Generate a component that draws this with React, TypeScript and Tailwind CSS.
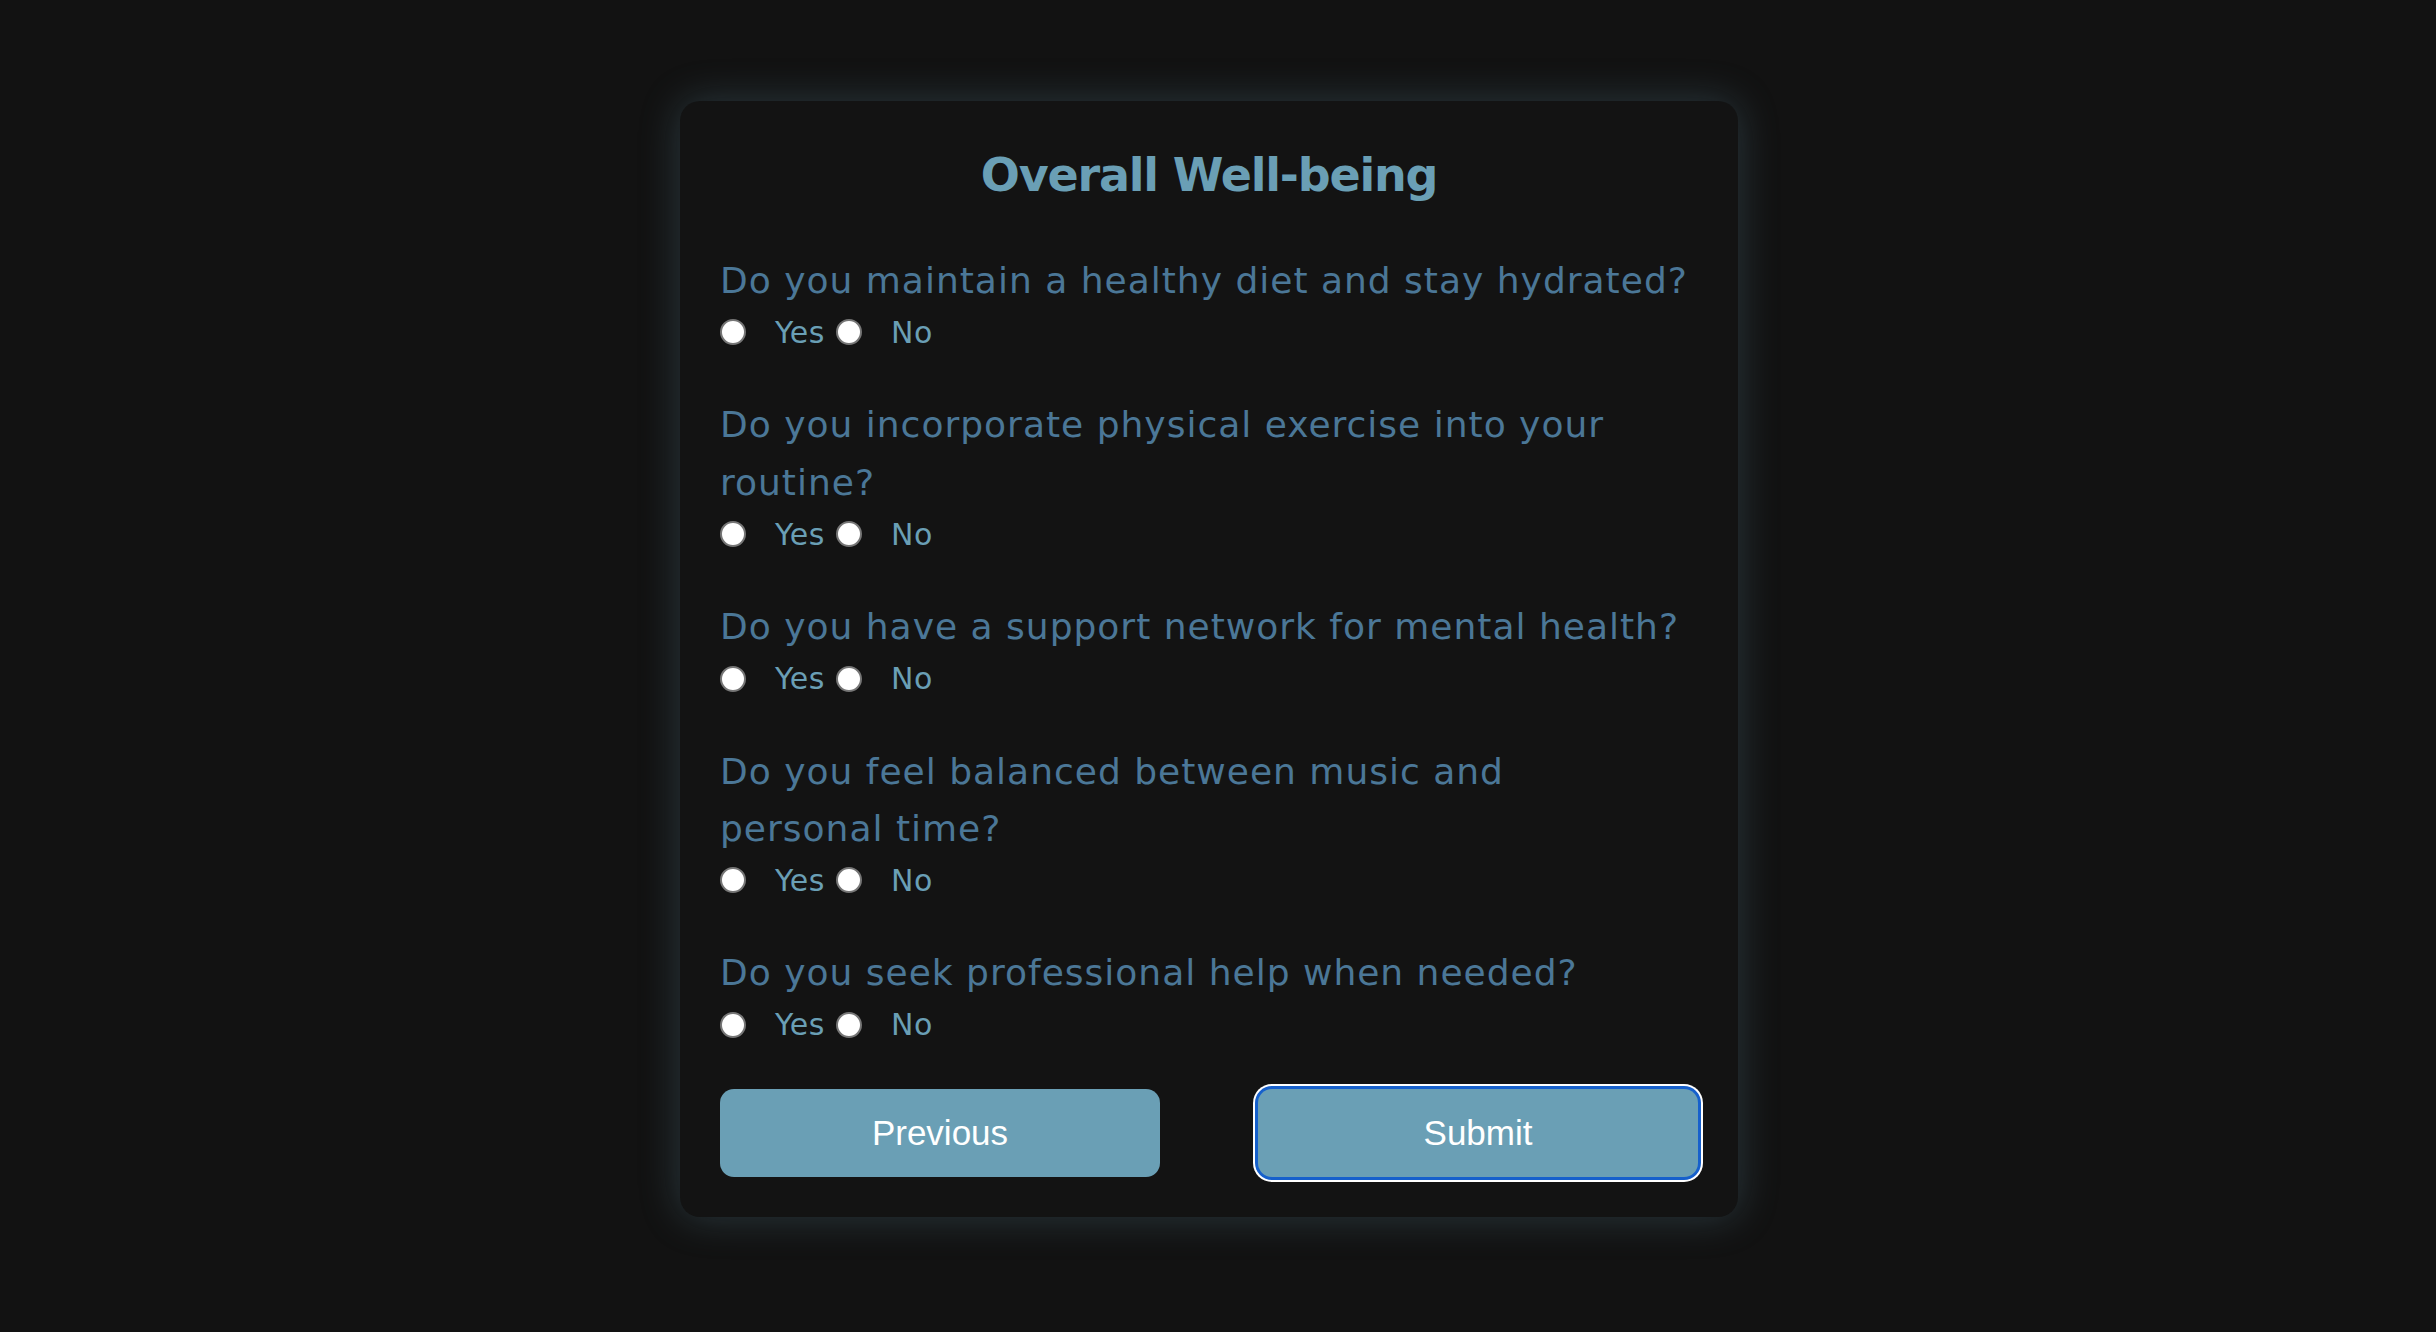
import { useState } from 'react';

const questions = [
  'Do you maintain a healthy diet and stay hydrated?',
  'Do you incorporate physical exercise into your routine?',
  'Do you have a support network for mental health?',
  'Do you feel balanced between music and personal\u00a0time?',
  'Do you seek professional help when needed?',
];

export default function App() {
  const [answers, setAnswers] = useState<Record<number, string>>({});

  return (
    <div className="min-h-screen w-full bg-[#121212] flex justify-center pt-[101px] pr-[18px] font-['DejaVu_Sans',sans-serif]">
      <div className="w-[1058px] h-fit bg-[#131313] rounded-[20px] px-[40px] pt-[45px] pb-[40px] shadow-[0_0_40px_rgba(106,159,181,0.28)]">
        <h2 className="text-center text-[46px] leading-[58px] font-bold tracking-[-1.2px] text-[#6a9fb5] mb-[48px]">
          Overall Well-being
        </h2>

        {questions.map((q, i) => (
          <div key={i} className="mb-[41px]">
            <p className="text-[36px] leading-[57.4px] tracking-[1px] text-[#4b7797]">{q}</p>
            <div className="flex items-center h-[46px]">
              {['Yes', 'No'].map((opt) => (
                <label key={opt} className="flex items-center">
                  <input
                    type="radio"
                    name={`q${i}`}
                    checked={answers[i] === opt}
                    onChange={() => setAnswers({ ...answers, [i]: opt })}
                    className="appearance-none w-[26px] h-[26px] rounded-full bg-white border-2 border-[#767676] m-0 checked:border-[8px] checked:border-[#6a9fb5]"
                  />
                  <span className="ml-[29px] mr-[11px] text-[30px] tracking-[0.5px] text-[#6a9fb5]">{opt}</span>
                </label>
              ))}
            </div>
          </div>
        ))}

        <div className="flex justify-between mt-[3px]">
          <button className="w-[440px] h-[88px] rounded-[14px] bg-[#6a9fb5] text-white text-[35px] font-['Liberation_Sans',sans-serif]">
            Previous
          </button>
          <button className="w-[440px] h-[88px] rounded-[14px] bg-[#6a9fb5] text-white text-[35px] font-['Liberation_Sans',sans-serif] shadow-[0_0_0_3px_#1660cc,0_0_0_5px_#ffffff]">
            Submit
          </button>
        </div>
      </div>
    </div>
  );
}
